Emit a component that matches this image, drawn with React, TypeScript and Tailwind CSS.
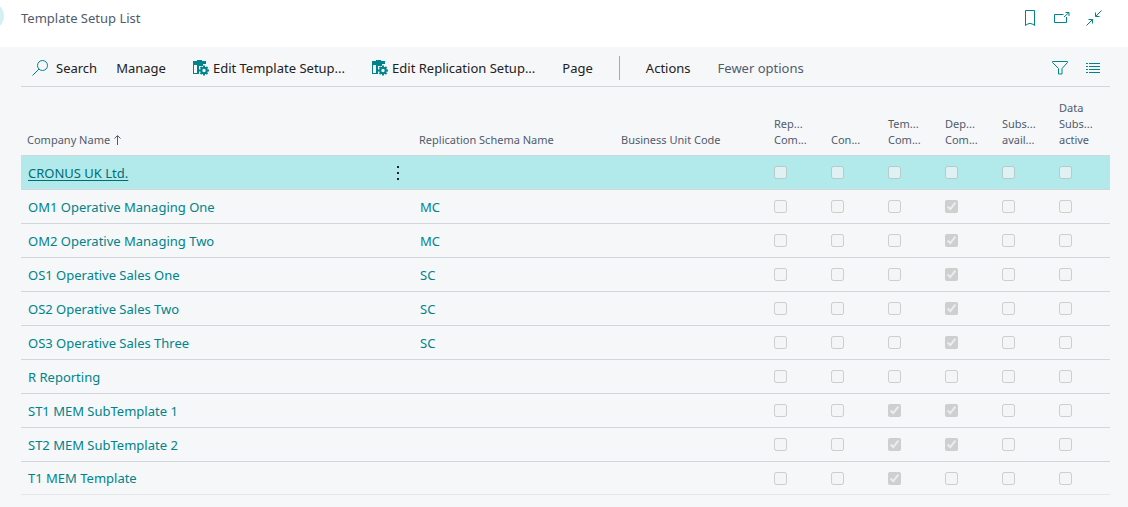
import type { ReactNode } from 'react';

type Row = {
	name: string;
	schema?: string;
	checked: number[];
};

const flagColumns = [
	['Rep...', 'Com...'],
	['Con...'],
	['Tem...', 'Com...'],
	['Dep...', 'Com...'],
	['Subs...', 'avail...'],
	['Data', 'Subs...', 'active'],
];

const rows: Row[] = [
	{ name: 'CRONUS UK Ltd.', checked: [] },
	{ name: 'OM1 Operative Managing One', schema: 'MC', checked: [3] },
	{ name: 'OM2 Operative Managing Two', schema: 'MC', checked: [3] },
	{ name: 'OS1 Operative Sales One', schema: 'SC', checked: [3] },
	{ name: 'OS2 Operative Sales Two', schema: 'SC', checked: [3] },
	{ name: 'OS3 Operative Sales Three', schema: 'SC', checked: [3] },
	{ name: 'R Reporting', checked: [] },
	{ name: 'ST1 MEM SubTemplate 1', checked: [2, 3] },
	{ name: 'ST2 MEM SubTemplate 2', checked: [2, 3] },
	{ name: 'T1 MEM Template', checked: [2] },
];

const Icon = ({ children }: { children: ReactNode }) => (
	<svg
		width="16"
		height="16"
		viewBox="0 0 16 16"
		fill="none"
		stroke="#00838a"
		className="shrink-0"
		aria-hidden="true"
	>
		{children}
	</svg>
);

const SetupIcon = () => (
	<Icon>
		<path d="M0 1h4V0h5v1h4v5H6v8H0z" fill="#00838a" stroke="none" />
		<path d="M1 5h3v8H1z" fill="#f6f7f9" stroke="none" />
		<path d="M6 4h7v2H6z" fill="#f6f7f9" stroke="none" />
		<path d="M6 4h4v2H6z" fill="#00838a" stroke="none" />
		<circle cx="11" cy="10.500" r="2.700" strokeWidth="2" />
		<path
			d="M11 5.500v2M11 13.500v2M6 10.500h2M14 10.500h2M7.500 7l1.400 1.400M13.100 12.600l1.400 1.400M14.500 7l-1.400 1.400M8.900 12.600L7.500 14"
			strokeWidth="2"
		/>
	</Icon>
);

const Header = () => (
	<header className="flex h-[47px] items-start justify-between bg-white pr-[26px]">
		<div className="flex items-start">
			<span className="mt-[2px] mr-[17px] flex w-1 justify-end overflow-hidden">
				<span className="size-7 shrink-0 rounded-full bg-[#d5f0f1]" />
			</span>
			<h1 className="pt-2 text-[13px] leading-5 text-[#505c6d]">Template Setup List</h1>
		</div>
		<div className="flex gap-4 pt-[10px]">
			<button type="button" aria-label="Bookmark">
				<Icon>
					<path d="M3.500.5h9v15L11 14.300q-3-2-6 0L3.500 15.500z" />
				</Icon>
			</button>
			<button type="button" aria-label="Open in new window">
				<Icon>
					<path d="M9.500 4.500h-9v8h12V7M10 7L15 2.500M11.500 2.500H15V6" />
				</Icon>
			</button>
			<button type="button" aria-label="Collapse">
				<Icon>
					<path d="M.5 15.500l6-6M2.500 9.500h4v4M15.500.5l-6 6M9.500 2.500v4h4" />
				</Icon>
			</button>
		</div>
	</header>
);

const Toolbar = () => (
	<div className="mr-[18px] ml-[21px] flex h-10 items-center border-b border-[#d3d6da] pt-[2px] pr-[9px] pl-[11px] text-[13px] leading-5 text-[#212121]">
		<button type="button" className="mr-[19px] flex items-center gap-2">
			<Icon>
				<circle cx="10.500" cy="5.500" r="5" />
				<path d="M7 9L.5 15.500" />
			</Icon>
			Search
		</button>
		<button type="button" className="mr-[27px]">Manage</button>
		<button type="button" className="mr-[27px] flex items-center gap-1">
			<SetupIcon />
			Edit Template Setup...
		</button>
		<button type="button" className="mr-[27px] flex items-center gap-1">
			<SetupIcon />
			Edit Replication Setup...
		</button>
		<button type="button">Page</button>
		<span className="mx-[26px] h-6 w-px bg-[#a5abb5]" />
		<button type="button" className="mr-[27px]">Actions</button>
		<button type="button" className="text-[#505c6d]">Fewer options</button>
		<div className="ml-auto flex gap-[17px]">
			<button type="button" aria-label="Filter">
				<Icon>
					<path d="M.5 1.500h15v1L10 8.500v5.500H6.500V8.500L.5 2.500z" />
				</Icon>
			</button>
			<button type="button" aria-label="List view">
				<Icon>
					<path d="M1 3.500h2M4 3.500h11M1 6.500h2M4 6.500h11M1 9.500h2M4 9.500h11M1 12.500h2M4 12.500h11" />
				</Icon>
			</button>
		</div>
	</div>
);

const SetupTable = () => (
	<div className="mr-[18px] ml-[21px]">
		<table className="w-full table-fixed border-separate border-spacing-0 text-left">
			<colgroup>
				<col />
				<col className="w-[30px]" />
				<col className="w-[202px]" />
				<col className="w-[153px]" />
				{flagColumns.map((_, i) => (
					<col key={i} className="w-[57px]" />
				))}
			</colgroup>
			<thead>
				<tr className="h-[69px] align-bottom text-[11px] leading-4 text-[#505c6d] *:border-b *:border-[#d3d6da] *:pb-[7px] *:font-normal">
					<th scope="col" className="pl-[6px]">
						<span className="flex items-center gap-1">
							Company Name
							<svg width="7" height="10" viewBox="0 0 7 10" fill="none" stroke="#505c6d" aria-hidden="true">
								<path d="M3.500 10V1M.5 3.500l3-3 3 3" />
							</svg>
						</span>
					</th>
					<td />
					<th scope="col" className="pl-[6px]">Replication Schema Name</th>
					<th scope="col" className="pl-[6px]">Business Unit Code</th>
					{flagColumns.map((lines, i) => (
						<th key={i} scope="col" className="pl-[6px]">
							{lines.map((line) => (
								<span key={line} className="block">{line}</span>
							))}
						</th>
					))}
				</tr>
			</thead>
			<tbody className="text-[13px] leading-5 text-[#00838a]">
				{rows.map((row, r) => (
					<tr
						key={row.name}
						className="h-[34px] *:border-b *:border-[#d3d6da] first:bg-[#b2e9eb] last:h-[33px] last:*:border-[#e4e6e9]"
					>
						<td className="pl-[7px]">
							<a href="#" className={r === 0 ? 'text-[#006d75] underline underline-offset-2' : ''}>
								{row.name}
							</a>
						</td>
						<td>
							{r === 0 && (
								<button type="button" aria-label="More options" className="flex w-full justify-center">
									<svg width="2" height="14" viewBox="0 0 2 14" fill="#212121">
										<path d="M0 0h2v2H0zM0 6h2v2H0zM0 12h2v2H0z" />
									</svg>
								</button>
							)}
						</td>
						<td className="pl-[7px]">{row.schema && <a href="#">{row.schema}</a>}</td>
						<td />
						{flagColumns.map((lines, i) => (
							<td key={i} className="pl-[6px]">
								<input
									type="checkbox"
									disabled
									defaultChecked={row.checked.includes(i)}
									aria-label={lines.join(' ')}
									className="block"
								/>
							</td>
						))}
					</tr>
				))}
			</tbody>
		</table>
	</div>
);

const App = () => (
	<div className="min-h-screen bg-[#f6f7f9] font-['Segoe_UI','Noto_Sans',sans-serif]">
		<Header />
		<main>
			<Toolbar />
			<SetupTable />
		</main>
	</div>
);

export default App;
